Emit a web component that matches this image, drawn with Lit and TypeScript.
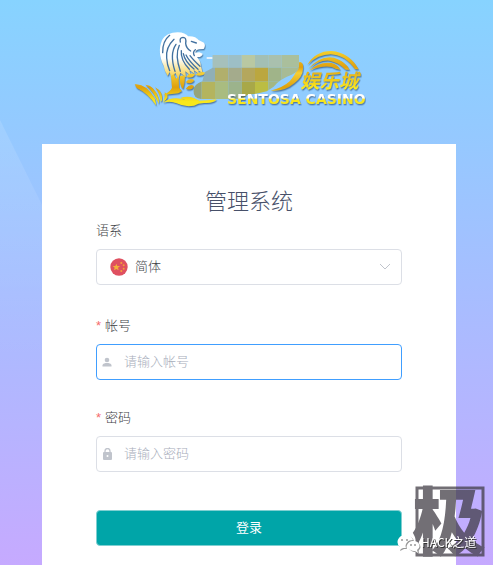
import { LitElement, html, css, svg } from "lit";
import { customElement, state } from "lit/decorators.js";

/* Mosaic tiles over the brand name: x, y, width, height, fill */
const TILES: [number, number, number, number, string][] = [
  [262, 105, 48, 38, "#a6c0bb"],
  [310, 105, 40, 38, "#9dbfc6"],
  [350, 105, 40, 38, "#b9c8a2"],
  [390, 105, 40, 38, "#a3bfb4"],
  [430, 105, 40, 38, "#a9c0ae"],
  [470, 105, 56, 38, "#aabf9c"],
  [225, 143, 45, 42, "#90afb6"],
  [270, 143, 40, 42, "#b1af6c"],
  [310, 143, 40, 42, "#a4ab8c"],
  [350, 143, 40, 42, "#b4a75d"],
  [390, 143, 40, 42, "#bba73f"],
  [430, 143, 40, 42, "#a0b489"],
  [470, 143, 56, 42, "#a7bb95"],
  [200, 185, 30, 56, "#96a47a"],
  [230, 185, 40, 56, "#b4b45e"],
  [270, 185, 40, 56, "#a9bc80"],
  [310, 185, 40, 56, "#9cb38c"],
  [350, 185, 40, 56, "#a8a848"],
  [390, 185, 40, 56, "#bbbd43"],
  [430, 185, 60, 56, "#a3b784"],
];

@customElement("brand-logo")
export class BrandLogo extends LitElement {
  static styles = css`
    :host {
      display: block;
    }
    .art {
      display: block;
      width: 250px;
      height: 100px;
      overflow: visible;
    }
    .cn {
      font: italic 700 58px "Noto Sans CJK SC", sans-serif;
    }
    .en {
      font: 700 42px "DejaVu Sans", sans-serif;
    }
    .shade {
      filter: drop-shadow(2px 4px 2px rgba(40, 70, 110, 0.6));
    }
  `;

  render() {
    return html`
      <svg class="art" viewBox="0 0 750 300" role="img" aria-label="Sentosa Casino">
        <defs>
          <linearGradient id="lion" gradientUnits="userSpaceOnUse" x1="0" y1="40" x2="0" y2="176">
            <stop offset="0.55" stop-color="#ffffff" />
            <stop offset="1" stop-color="#f3cb3c" />
          </linearGradient>
          <linearGradient id="gold" gradientUnits="userSpaceOnUse" x1="0" y1="90" x2="0" y2="262">
            <stop offset="0" stop-color="#f7d32c" />
            <stop offset="0.3" stop-color="#e0a010" />
            <stop offset="0.4" stop-color="#f6cf35" />
            <stop offset="0.65" stop-color="#dea00c" />
            <stop offset="0.9" stop-color="#f9e81c" />
          </linearGradient>
          <linearGradient id="cnFill" gradientUnits="userSpaceOnUse" x1="0" y1="150" x2="0" y2="212">
            <stop offset="0" stop-color="#e3a916" />
            <stop offset="1" stop-color="#fff21e" />
          </linearGradient>
          <linearGradient id="enFill" gradientUnits="userSpaceOnUse" x1="0" y1="222" x2="0" y2="250">
            <stop offset="0.4" stop-color="#ffffff" />
            <stop offset="0.6" stop-color="#f7e51f" />
          </linearGradient>
          <clipPath id="blot">
            <path d="M262 105H522V143Q518 156 500 164Q462 178 446 200L425 214Q400 222 368 224L350 237H228Q206 236 205 214Q206 192 232 184L240 156L262 144Z" />
          </clipPath>
        </defs>
        <g class="shade">
          <path
            fill="url(#lion)"
            d="M116 137C103 112 101 84 111 61C119 45 137 37 158 37C174 37 184 42 190 49C204 48 216 53 222 61L237 68Q243 76 236 87L222 88Q211 91 211 98L223 97L233 101Q231 112 216 111Q228 126 227 134L233 160L220 151L222 162L206 150L210 163L193 150L197 167L181 154L183 172L166 158L160 178L151 158L140 177L134 156L128 168Q118 151 116 137Z"
          />
          <g fill="url(#gold)">
            <path d="M138 168L146 162L153 176L161 170L162 203L171 213L160 220L114 225Q136 215 141 203Z" />
            <path d="M165 168L180 166Q180 189 174 207Q163 199 165 168Z" />
            <path d="M184 170Q194 155 210 163Q202 178 184 170ZM211 164Q224 152 243 158Q231 172 211 164ZM182 187Q193 172 208 180Q200 195 182 187ZM182 206Q194 190 207 198Q201 214 182 206Z" />
            <path d="M29 193Q62 189 90 236L94 257Q68 219 35 204Z" />
            <path d="M61 194Q88 195 101 236L102 252Q86 214 61 194Z" />
            <path d="M90 202Q114 214 111 241L107 246Q106 221 90 202Z" />
            <path d="M119 217Q130 223 127 233Q124 241 113 246Q122 232 119 217Z" />
            <path d="M114 248Q140 229 170 237Q210 247 275 238Q267 251 237 249Q218 250 207 257Q178 262 155 250Q137 242 114 248Z" />
            <path d="M165 234Q188 227 207 234L232 247Q197 248 165 234Z" />
          </g>
        </g>
        <g fill="none" stroke="#41709f" stroke-width="4" stroke-linecap="round">
          <path d="M134 46Q112 64 113 98M147 58Q122 82 125 114Q126 134 134 152M153 73Q133 102 150 154M163 76Q149 105 166 154M169 92Q166 120 193 148M175 101Q179 124 207 147M183 105Q191 122 219 148M195 107Q204 119 225 139" />
          <path d="M166 66Q163 53 174 52Q185 52 182 70Q183 84 197 93M199 64L214 69M211 89Q202 96 208 107" />
        </g>
        <path d="M245 114H263" stroke="#f5f8ff" stroke-width="5" />
        <g class="shade" fill="url(#gold)">
          <path d="M547 134Q573 92 620 93Q672 97 701 148L690 148Q661 105 617 103Q580 103 547 134Z" />
          <path d="M550 147Q585 105 627 113Q659 122 674 149L662 149Q640 127 613 122Q582 119 550 147Z" />
          <path d="M552 152Q584 123 620 129Q638 134 646 149L633 147Q607 130 552 152Z" />
          <path d="M523 126Q537 126 534 148Q533 171 508 190Q477 216 437 212Q474 203 494 184Q512 162 517 147Z" />
        </g>
        ${TILES.map(
          ([x, y, w, h, fill]) =>
            svg`<rect clip-path="url(#blot)" x=${x} y=${y} width=${w} height=${h} fill=${fill} />`
        )}
        <text class="cn shade" x="526" y="205" fill="url(#cnFill)">娱乐城</text>
        <text class="en shade" x="306" y="251" fill="url(#enFill)">SENTOSA CASINO</text>
      </svg>
    `;
  }
}

@customElement("corner-stamp")
export class CornerStamp extends LitElement {
  static styles = css`
    :host {
      display: block;
      width: 92px;
      height: 78px;
      pointer-events: none;
    }
    .art {
      display: block;
      width: 100%;
      height: 100%;
      overflow: visible;
    }
    .seal {
      font: 900 74px "Noto Sans CJK SC", sans-serif;
    }
    .name {
      font: 400 12px "Noto Sans CJK SC", sans-serif;
      filter: drop-shadow(1px 1px 0 #333);
    }
    .chat {
      filter: drop-shadow(1px 1px 0 #999);
    }
  `;

  render() {
    return html`
      <svg class="art" viewBox="0 0 92 78">
        <g opacity="0.72">
          <rect x="20" y="7" width="66" height="67" fill="none" stroke="#3c3941" stroke-width="3" />
          <text class="seal" x="15" y="68" fill="#3c3941">极</text>
        </g>
        <g class="chat" fill="#fff">
          <path d="M8 54a8 7 0 0 0-5 12l-1 3 4-2h3a7 6 0 0 1 7-8 8 7 0 0 0-8-5Z" />
          <path d="M16 60a6 5 0 1 0 2 10l3 2-1-3a6 5 0 0 0-4-9Z" />
          <g fill="#999">
            <circle cx="5" cy="59" r="1" />
            <circle cx="10" cy="59" r="1" />
            <circle cx="14" cy="64" r="1" />
            <circle cx="18" cy="64" r="1" />
          </g>
        </g>
        <text class="name" x="24" y="66" fill="#fff">HACK之道</text>
      </svg>
    `;
  }
}

@customElement("app-root")
export class AppRoot extends LitElement {
  @state() private activeField = "account";

  static styles = css`
    :host {
      position: relative;
      display: flex;
      flex-direction: column;
      box-sizing: border-box;
      min-height: 100vh;
      overflow: hidden;
      background: linear-gradient(#87d3ff, #95c9ff 24%, #a9bcff 55%, #c6aaff);
      font-family: "Noto Sans CJK SC", sans-serif;
      font-size: 13px;
      font-weight: 300;
      color: #606266;
    }
    :host::before {
      content: "";
      position: absolute;
      inset: 120px 0 0 0;
      background: linear-gradient(rgba(255, 255, 255, 0.12), transparent 55%);
      clip-path: polygon(0 0, 220px 100%, 0 100%);
    }
    header {
      position: relative;
      display: flex;
      justify-content: center;
      padding: 20px 0 24px 7px;
    }
    .card {
      position: relative;
      flex: 1;
      box-sizing: border-box;
      margin: 0 37px 0 42px;
      padding: 41px 54px 16px;
      background: #fff;
    }
    h1 {
      margin: 0;
      font-size: 22px;
      font-weight: 300;
      line-height: 28px;
      text-align: center;
      color: #475069;
    }
    .field {
      margin-bottom: 20px;
    }
    .field.language {
      margin-bottom: 23px;
    }
    .field.last {
      margin-bottom: 38px;
    }
    label {
      display: block;
      padding-bottom: 2px;
      line-height: 34px;
      font-weight: 300;
      color: #404246;
    }
    .star {
      margin-right: 4px;
      font-family: "Liberation Sans", sans-serif;
      font-weight: 400;
      line-height: 1;
      color: #f56c6c;
    }
    .box {
      display: flex;
      align-items: center;
      box-sizing: border-box;
      height: 36px;
      border: 1px solid #dcdfe6;
      border-radius: 4px;
      background: #fff;
    }
    .box.active {
      border-color: #409eff;
    }
    .box svg {
      flex: none;
    }
    .flag {
      margin-left: 13px;
    }
    .arrow {
      margin-right: 10px;
      pointer-events: none;
    }
    .lead {
      margin: 0 11px 0 4px;
    }
    select,
    input {
      flex: 1;
      min-width: 0;
      height: 34px;
      margin: 0;
      padding: 0 0 3px;
      border: 0;
      outline: 0;
      appearance: none;
      background: none;
      font: inherit;
      color: #404246;
    }
    select {
      padding-left: 7px;
    }
    input::placeholder {
      color: #a8aebb;
      opacity: 1;
    }
    button {
      display: block;
      width: 100%;
      height: 36px;
      padding: 0 0 3px;
      border: 1px solid #7fcfd1;
      border-radius: 4px;
      background: #00a5a8;
      font: inherit;
      font-weight: 400;
      color: #fff;
    }
    corner-stamp {
      position: absolute;
      right: 4px;
      bottom: 6px;
    }
  `;

  private activate(name: string) {
    this.activeField = name;
  }

  private boxClass(name: string) {
    return this.activeField === name ? "box active" : "box";
  }

  render() {
    return html`
      <header><brand-logo></brand-logo></header>
      <form class="card" @submit=${(e: Event) => e.preventDefault()}>
        <h1>管理系统</h1>
        <div class="field language">
          <label for="language">语系</label>
          <div class=${this.boxClass("language")}>
            <svg class="flag" width="18" height="18" viewBox="0 0 54 54" aria-hidden="true">
              <circle cx="27" cy="27" r="26" fill="#df5060" />
              <path fill="#f2b13a" d="M19 17l3 7h8l-6 5 2 8-7-4-7 4 2-8-6-5h8Z" />
              <g fill="#f2a13a">
                <circle cx="34" cy="15" r="3" />
                <circle cx="41" cy="22" r="3" />
                <circle cx="41" cy="32" r="3" />
                <circle cx="34" cy="39" r="3" />
              </g>
            </svg>
            <select id="language" @focus=${() => this.activate("language")}>
              <option>简体</option>
            </select>
            <svg class="arrow" width="12" height="12" viewBox="0 0 12 12" aria-hidden="true">
              <path d="M1 3l5 5 5-5" fill="none" stroke="#c0c4cc" />
            </svg>
          </div>
        </div>
        <div class="field">
          <label for="account"><span class="star">*</span>帐号</label>
          <div class=${this.boxClass("account")}>
            <svg class="lead" width="12" height="12" viewBox="0 0 12 12" fill="#c0c4cc" aria-hidden="true">
              <circle cx="6" cy="4" r="2.3" />
              <path d="M1.5 10.5V9.5C1.5 7.5 4.5 7 6 7s4.5 0.5 4.5 2.5v1Z" />
            </svg>
            <input id="account" type="text" placeholder="请输入帐号" @focus=${() => this.activate("account")} />
          </div>
        </div>
        <div class="field last">
          <label for="password"><span class="star">*</span>密码</label>
          <div class=${this.boxClass("password")}>
            <svg class="lead" width="12" height="12" viewBox="0 0 12 12" aria-hidden="true">
              <rect x="2" y="4" width="9" height="8" rx="1" fill="#c0c4cc" />
              <path d="M4 5V3a2.5 2.5 0 0 1 5 0v2" fill="none" stroke="#c0c4cc" stroke-width="1.3" />
              <circle cx="6.5" cy="8" r="1" fill="#fff" />
            </svg>
            <input id="password" type="password" placeholder="请输入密码" @focus=${() => this.activate("password")} />
          </div>
        </div>
        <button type="submit">登录</button>
      </form>
      <corner-stamp></corner-stamp>
    `;
  }
}
